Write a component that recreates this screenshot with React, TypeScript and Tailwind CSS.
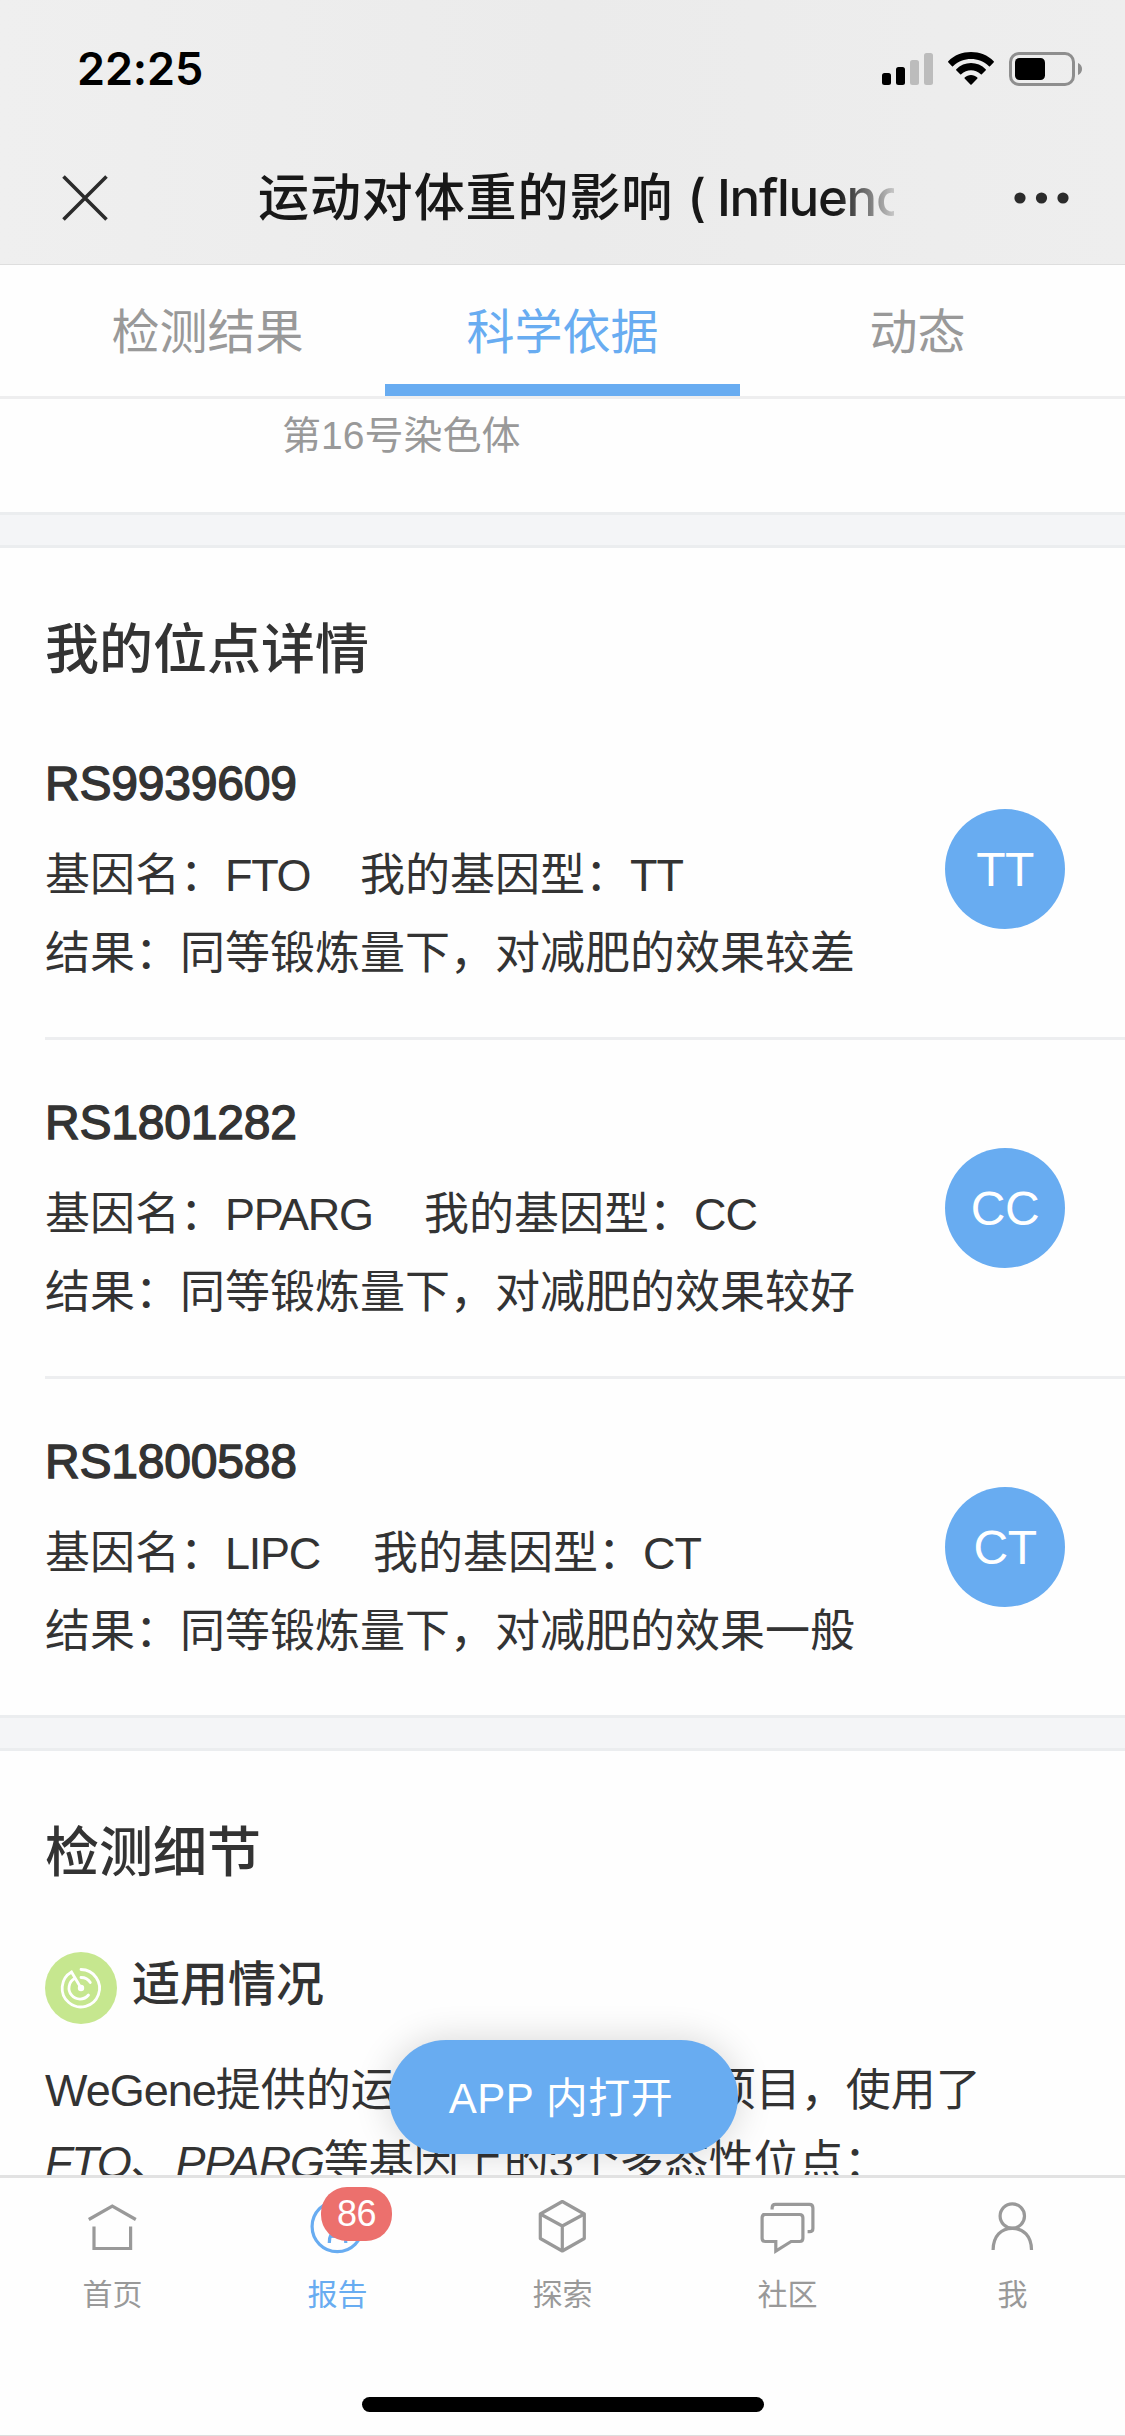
import type { ReactNode } from 'react';
import clsx from 'clsx';

interface Site {
  rs: string;
  gene: string;
  geneWidth: string;
  genotype: string;
  result: string;
}

const tabs = ['检测结果', '科学依据', '动态'];

const sites: Site[] = [
  {
    rs: 'RS9939609',
    gene: 'FTO',
    geneWidth: 'w-[135px]',
    genotype: 'TT',
    result: '同等锻炼量下，对减肥的效果较差',
  },
  {
    rs: 'RS1801282',
    gene: 'PPARG',
    geneWidth: 'w-[199px]',
    genotype: 'CC',
    result: '同等锻炼量下，对减肥的效果较好',
  },
  {
    rs: 'RS1800588',
    gene: 'LIPC',
    geneWidth: 'w-[148px]',
    genotype: 'CT',
    result: '同等锻炼量下，对减肥的效果一般',
  },
];

const StatusBar = () => (
  <div className="flex h-[132px] items-start justify-between pl-[77px] pr-[42px] pt-[40px]">
    <span className="font-[Inter] text-[45px] font-semibold leading-[58px] tracking-[-0.1px] text-black">
      22:25
    </span>
    <svg width="201" height="34" viewBox="0 0 201 34" className="mt-[12px]">
      <rect x="0" y="21" width="9" height="12" rx="2.5" fill="#000" />
      <rect x="14" y="15" width="9" height="18" rx="2.5" fill="#000" />
      <rect x="28" y="8" width="9" height="25" rx="2.5" fill="#bcbcbc" />
      <rect x="42" y="1" width="9" height="32" rx="2.5" fill="#bcbcbc" />
      <path
        d="M66.2 10.2 Q65.8 9.8 66.3 9.3 C78 -3 100 -3 111.7 9.3 Q112.2 9.8 111.8 10.2 L108 14.2 Q107.5 14.6 107 14.2 C97 4.6 81 4.6 71 14.2 Q70.5 14.6 70 14.2 Z"
        fill="#000"
      />
      <path
        d="M74.2 18.2 Q73.8 17.8 74.3 17.3 C82 9 96 9 103.7 17.3 Q104.2 17.8 103.8 18.2 L99.8 22.3 Q99.3 22.7 98.8 22.3 C93 17 85 17 79.2 22.3 Q78.7 22.7 78.2 22.3 Z"
        fill="#000"
      />
      <path
        d="M82.6 26.4 Q82.2 26 82.7 25.5 C86 22 92 22 95.3 25.5 Q95.8 26 95.4 26.4 L89.6 32.5 Q89 33 88.4 32.5 Z"
        fill="#000"
      />
      <rect x="128.5" y="1.5" width="63" height="31" rx="8.5" fill="none" stroke="#8e8e8e" strokeWidth="3" />
      <rect x="133" y="6" width="30" height="22" rx="4.5" fill="#000" />
      <path d="M196 11 C201.4 13 201.4 21 196 23 Z" fill="#8e8e8e" />
    </svg>
  </div>
);

const NavBar = () => (
  <div className="flex h-[133px] items-center justify-between border-b border-[#dedede] pl-[62px] pr-[56px]">
    <svg width="46" height="46" viewBox="0 0 46 46" fill="none" stroke="#2b2b2b" strokeWidth="3.6">
      <path d="M1.5 1.5 L44.5 44.5 M44.5 1.5 L1.5 44.5" />
    </svg>
    <div className="ml-[30px] w-[636px] overflow-hidden whitespace-nowrap text-[51px] font-medium leading-[76px] text-[#181818] [mask-image:linear-gradient(to_right,black_91%,transparent_102%)]">
      <span className="tracking-[0.9px]">运动对体重的影响</span>
      <span className="ml-[14px] font-[Inter] tracking-[-1.3px]">( Influence )</span>
    </div>
    <svg width="55" height="12" viewBox="0 0 55 12" fill="#2b2b2b">
      <circle cx="6" cy="6" r="5.6" />
      <circle cx="27.5" cy="6" r="5.6" />
      <circle cx="49" cy="6" r="5.6" />
    </svg>
  </div>
);

const Divider = () => (
  <div className="h-[36px] border-y-[3px] border-[#ebedef] bg-[#f4f5f7]" />
);

const SectionTitle = ({ children }: { children: ReactNode }) => (
  <h2 className="pl-[45px] pt-[62px] text-[54px] font-medium leading-[80px]">{children}</h2>
);

const SiteRow = ({ site, last }: { site: Site; last: boolean }) => (
  <div
    className={clsx(
      'ml-[45px] flex items-center justify-between pr-[60px]',
      last ? 'h-[336px]' : 'h-[339px] border-b-[3px] border-[#edeef0]',
    )}
  >
    <div className="pt-[2px]">
      <h3 className="text-[48px] leading-[72px] tracking-[-0.2px] [-webkit-text-stroke:1.4px_#333]">
        {site.rs}
      </h3>
      <div className="mt-[17px] flex leading-[78px]">
        <span>基因名：</span>
        <span className={clsx('tracking-[-1.3px]', site.geneWidth)}>{site.gene}</span>
        <span>我的基因型：</span>
        <span className="tracking-[-1px]">{site.genotype}</span>
      </div>
      <p className="leading-[78px]">结果：{site.result}</p>
    </div>
    <div className="flex size-[120px] items-center justify-center rounded-full bg-[#68acf1] pt-[2px] text-[48px] tracking-[-0.5px] text-white">
      {site.genotype}
    </div>
  </div>
);

const RadarIcon = () => (
  <svg width="72" height="72" viewBox="0 0 72 72" fill="none" stroke="#fff" strokeWidth="2.8" strokeLinecap="round">
    <circle cx="36" cy="36" r="36" fill="#c6e78f" stroke="none" />
    <path d="M36 17.5 A18.7 18.7 0 1 1 26.5 20 L36 36" />
    <path d="M29.5 26.5 A11 11 0 1 0 43.5 43" />
    <path d="M36 25.5 C40 25.5 43.5 27.5 45.3 30.5" />
    <circle cx="36" cy="36" r="3.2" fill="#fff" stroke="none" />
  </svg>
);

const HomeIcon = () => (
  <>
    <path d="M24.5 31.5 L48 18 L71.5 31.5" />
    <path d="M29.7 38.5 V60.5 H66.3 V38.5" />
  </>
);

const ReportIcon = () => (
  <>
    <circle cx="48" cy="38.5" r="25.2" />
    <path d="M40 55 C40 47 42 45 48 39 C54 33 56.5 31 56.5 23 M56.5 55 C56.5 47 54 45 48 39 C42 33 40 31 40 23" />
    <path d="M41 48.3 H56" />
  </>
);

const CubeIcon = () => (
  <g strokeLinejoin="round">
    <path d="M48 13.5 L70 26 V50.5 L48 63 L26 50.5 V26 Z" />
    <path d="M26 26 L48 38 L70 26 M48 38 V63" />
  </g>
);

const ChatIcon = () => (
  <g transform="translate(-1.7 0)">
    <path d="M24.8 26.5 H62 Q65.3 26.5 65.3 29.8 V50.2 Q65.3 53.5 62 53.5 H53.5 L38.2 63 V53.5 H27.8 Q24.5 53.5 24.5 50.2 V29.8 Q24.5 26.5 27.8 26.5" />
    <path d="M34.5 21.5 V20 Q34.5 16.3 37.8 16.3 H71.8 Q75.3 16.3 75.3 20 V40.5 Q75.3 43.7 72 43.7 H70" />
  </g>
);

const UserIcon = () => (
  <>
    <circle cx="48" cy="28" r="12.2" />
    <path d="M28.8 62 C28.8 48 37 40.3 48 40.3 C59 40.3 67.2 48 67.2 62" />
  </>
);

const menu = [
  { label: '首页', icon: <HomeIcon /> },
  { label: '报告', icon: <ReportIcon />, active: true, badge: 86 },
  { label: '探索', icon: <CubeIcon /> },
  { label: '社区', icon: <ChatIcon /> },
  { label: '我', icon: <UserIcon /> },
];

const BottomBar = () => (
  <nav className="flex h-[261px] flex-col items-center border-b border-t-[3px] border-b-[#dddddd] border-t-[#e2e2e2] bg-[#fefefe]">
    <div className="grid h-[219px] w-full grid-cols-5">
      {menu.map((item) => (
        <div
          key={item.label}
          className={clsx(
            'relative flex flex-col items-center pt-[10px]',
            item.active ? 'text-[#68acf1]' : 'text-[#999999]',
          )}
        >
          <svg width="96" height="76" viewBox="0.7 0 96 76" fill="none" stroke="currentColor" strokeWidth="3.2">
            {item.icon}
          </svg>
          <span className="mt-[11px] text-[30px] leading-[40px]">{item.label}</span>
          {item.badge && (
            <span className="absolute left-[96px] top-[9px] flex h-[54px] w-[71px] items-center justify-center rounded-[26px] bg-[#ec706d] text-[36px] tracking-[-0.5px] text-white">
              {item.badge}
            </span>
          )}
        </div>
      ))}
    </div>
    <div className="h-[15px] w-[402px] rounded-full bg-black" />
  </nav>
);

const App = () => {
  return (
    <div
      lang="zh-CN"
      className="flex h-[2436px] w-[1125px] flex-col overflow-hidden bg-[#fefefe] font-['Liberation_Sans','Noto_Sans_CJK_SC',sans-serif] text-[45px] text-[#333333]"
    >
      <header className="bg-linear-to-r from-[#efefef] via-[#ebebeb] to-[#eeeeee]">
        <StatusBar />
        <NavBar />
      </header>

      <div className="flex h-[134px] border-b-[3px] border-[#eeeeef] px-[30px]">
        {tabs.map((tab, index) => (
          <div
            key={tab}
            className={clsx(
              'flex-1 pt-[32px] text-center text-[48px] leading-[72px]',
              index === 1 ? 'border-b-[12px] border-[#68acf1] text-[#68acf1]' : 'text-[#999999]',
            )}
          >
            {tab}
          </div>
        ))}
      </div>

      <main className="relative min-h-0 flex-1 overflow-hidden">
        <p className="h-[113px] pl-[282px] text-[39px] leading-[74px] text-[#999999]">第16号染色体</p>

        <Divider />
        <section>
          <SectionTitle>我的位点详情</SectionTitle>
          <div className="pt-[11px]">
            {sites.map((site, index) => (
              <SiteRow key={site.rs} site={site} last={index === sites.length - 1} />
            ))}
          </div>
        </section>

        <Divider />
        <section>
          <SectionTitle>检测细节</SectionTitle>
          <div className="mt-[59px] flex h-[72px] gap-[15px] pl-[45px]">
            <RadarIcon />
            <h3 className="text-[48px] font-medium leading-[65px]">适用情况</h3>
          </div>
          <div className="mt-[31px] whitespace-nowrap pl-[45px] leading-[72px]">
            <p>
              <span className="tracking-[-1px]">WeGene</span>提供的运动对体重的影响项目，使用了
            </p>
            <p>
              <em className="tracking-[-1.2px]">FTO</em>、<em className="tracking-[-1.2px]">PPARG</em>
              等基因上的3个多态性位点：
            </p>
          </div>
        </section>

        <button className="absolute bottom-[21px] left-[389px] h-[114px] w-[349px] rounded-full bg-[#68acf1] pr-[5px] pt-[2px] text-[42px] tracking-[0.5px] text-white shadow-[0_0_36px_rgba(0,0,0,0.16)]">
          APP 内打开
        </button>
      </main>

      <BottomBar />
    </div>
  );
};

export default App;
